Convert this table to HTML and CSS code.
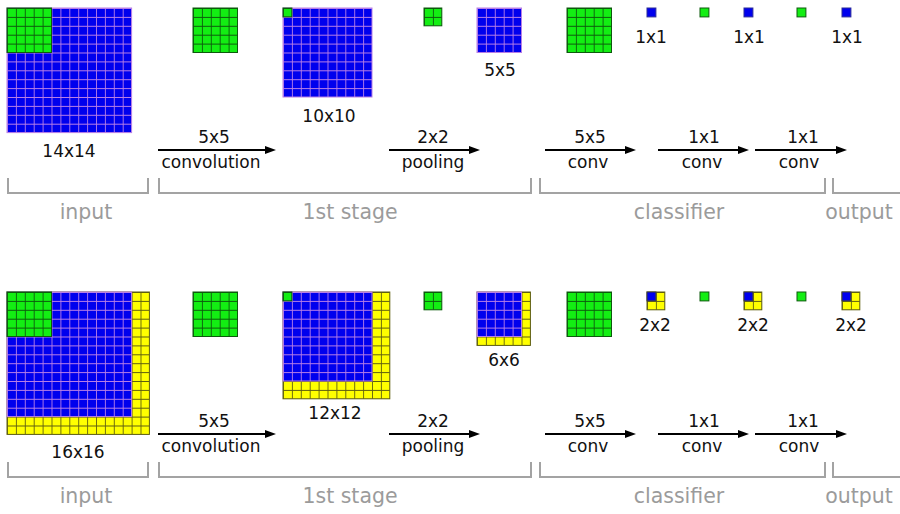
FILE: index.html
```html
<!DOCTYPE html>
<html lang="en">
<head>
<meta charset="utf-8">
<title>Convolutional network diagram</title>
<link rel="stylesheet" href="styles.css">
</head>
<body>
<main class="figure">
  <svg class="panel panel-top" width="900" height="284" viewBox="0 0 900 284" xmlns="http://www.w3.org/2000/svg">
    <defs>
      <pattern id="pb" width="8.9" height="8.9" patternUnits="userSpaceOnUse">
        <rect width="8.9" height="8.9" fill="#0000ee"/>
        <path d="M0 0H8.9M0 0V8.9" stroke="#b87ee6" stroke-width="1.8"/>
      </pattern>
      <pattern id="pg" width="8.9" height="8.9" patternUnits="userSpaceOnUse">
        <rect width="8.9" height="8.9" fill="#13ee13"/>
        <path d="M0 0H8.9M0 0V8.9" stroke="#0d5a0d" stroke-width="1.8"/>
      </pattern>
      <pattern id="py" width="8.9" height="8.9" patternUnits="userSpaceOnUse">
        <rect width="8.9" height="8.9" fill="#ffff00"/>
        <path d="M0 0H8.9M0 0V8.9" stroke="#5e5e10" stroke-width="1.8"/>
      </pattern>
    </defs>

    <!-- matrices -->
    <g transform="translate(7 8)"><rect class="blu" width="124.6" height="124.6"/><rect class="grn" width="44.5" height="44.5"/></g>
    <g transform="translate(193 8)"><rect class="grn" width="44.5" height="44.5"/></g>
    <g transform="translate(283 8)"><rect class="blu" width="89" height="89"/><rect class="grn" width="8.9" height="8.9"/></g>
    <g transform="translate(424 8)"><rect class="grn" width="17.8" height="17.8"/></g>
    <g transform="translate(477 8)"><rect class="blu" width="44.5" height="44.5"/></g>
    <g transform="translate(567 8)"><rect class="grn" width="44.5" height="44.5"/></g>
    <g transform="translate(647 8)"><rect class="cell-b" width="8.9" height="8.9"/></g>
    <g transform="translate(700 8)"><rect class="cell-g" width="8.9" height="8.9"/></g>
    <g transform="translate(744 8)"><rect class="cell-b" width="8.9" height="8.9"/></g>
    <g transform="translate(797 8)"><rect class="cell-g" width="8.9" height="8.9"/></g>
    <g transform="translate(842 8)"><rect class="cell-b" width="8.9" height="8.9"/></g>

    <!-- size labels -->
    <text class="lbl" x="69" y="157">14x14</text>
    <text class="lbl" x="329" y="122">10x10</text>
    <text class="lbl" x="500" y="76">5x5</text>
    <text class="lbl" x="651" y="43">1x1</text>
    <text class="lbl" x="749" y="43">1x1</text>
    <text class="lbl" x="847" y="43">1x1</text>

    <!-- arrows -->
    <g class="arrow"><line x1="158" y1="150" x2="268" y2="150"/><polygon points="265,146 276,150 265,154"/></g>
    <g class="arrow"><line x1="389" y1="150" x2="472" y2="150"/><polygon points="469,146 480,150 469,154"/></g>
    <g class="arrow"><line x1="545" y1="150" x2="628" y2="150"/><polygon points="625,146 636,150 625,154"/></g>
    <g class="arrow"><line x1="658" y1="150" x2="741" y2="150"/><polygon points="738,146 749,150 738,154"/></g>
    <g class="arrow"><line x1="755" y1="150" x2="839" y2="150"/><polygon points="836,146 847,150 836,154"/></g>

    <text class="lbl" x="214" y="143">5x5</text>
    <text class="lbl" x="211" y="168">convolution</text>
    <text class="lbl" x="433" y="143">2x2</text>
    <text class="lbl" x="433" y="168">pooling</text>
    <text class="lbl" x="590" y="143">5x5</text>
    <text class="lbl" x="588" y="168">conv</text>
    <text class="lbl" x="704" y="143">1x1</text>
    <text class="lbl" x="702" y="168">conv</text>
    <text class="lbl" x="803" y="143">1x1</text>
    <text class="lbl" x="799" y="168">conv</text>

    <!-- brackets -->
    <path class="brk" d="M8 178V193H148V178"/>
    <path class="brk" d="M159 178V193H531V178"/>
    <path class="brk" d="M540 178V193H825V178"/>
    <path class="brk" d="M833 178V193H900"/>
    <text class="stage" x="86" y="219">input</text>
    <text class="stage" x="350" y="219">1st stage</text>
    <text class="stage" x="679" y="219">classifier</text>
    <text class="stage" x="859" y="219">output</text>
  </svg>

  <svg class="panel panel-bottom" width="900" height="230" viewBox="0 284 900 230" xmlns="http://www.w3.org/2000/svg">
    <!-- matrices -->
    <g transform="translate(7 292)"><rect class="yel" width="142.4" height="142.4"/><rect class="blu" width="124.6" height="124.6"/><rect class="grn" width="44.5" height="44.5"/></g>
    <g transform="translate(193 292)"><rect class="grn" width="44.5" height="44.5"/></g>
    <g transform="translate(283 292)"><rect class="yel" width="106.8" height="106.8"/><rect class="blu" width="89" height="89"/><rect class="grn" width="8.9" height="8.9"/></g>
    <g transform="translate(424 292)"><rect class="grn" width="17.8" height="17.8"/></g>
    <g transform="translate(477 292)"><rect class="yel" width="53.4" height="53.4"/><rect class="blu" width="44.5" height="44.5"/></g>
    <g transform="translate(567 292)"><rect class="grn" width="44.5" height="44.5"/></g>
    <g transform="translate(647 292)"><rect class="yel" width="17.8" height="17.8"/><rect class="cell-b dark" width="8.9" height="8.9"/></g>
    <g transform="translate(700 292)"><rect class="cell-g" width="8.9" height="8.9"/></g>
    <g transform="translate(744 292)"><rect class="yel" width="17.8" height="17.8"/><rect class="cell-b dark" width="8.9" height="8.9"/></g>
    <g transform="translate(797 292)"><rect class="cell-g" width="8.9" height="8.9"/></g>
    <g transform="translate(842 292)"><rect class="yel" width="17.8" height="17.8"/><rect class="cell-b dark" width="8.9" height="8.9"/></g>

    <!-- size labels -->
    <text class="lbl" x="78" y="458">16x16</text>
    <text class="lbl" x="335" y="419">12x12</text>
    <text class="lbl" x="504" y="366">6x6</text>
    <text class="lbl" x="655" y="331">2x2</text>
    <text class="lbl" x="753" y="331">2x2</text>
    <text class="lbl" x="851" y="331">2x2</text>

    <!-- arrows -->
    <g class="arrow"><line x1="158" y1="434" x2="268" y2="434"/><polygon points="265,430 276,434 265,438"/></g>
    <g class="arrow"><line x1="389" y1="434" x2="472" y2="434"/><polygon points="469,430 480,434 469,438"/></g>
    <g class="arrow"><line x1="545" y1="434" x2="628" y2="434"/><polygon points="625,430 636,434 625,438"/></g>
    <g class="arrow"><line x1="658" y1="434" x2="741" y2="434"/><polygon points="738,430 749,434 738,438"/></g>
    <g class="arrow"><line x1="755" y1="434" x2="839" y2="434"/><polygon points="836,430 847,434 836,438"/></g>

    <text class="lbl" x="214" y="427">5x5</text>
    <text class="lbl" x="211" y="452">convolution</text>
    <text class="lbl" x="433" y="427">2x2</text>
    <text class="lbl" x="433" y="452">pooling</text>
    <text class="lbl" x="590" y="427">5x5</text>
    <text class="lbl" x="588" y="452">conv</text>
    <text class="lbl" x="704" y="427">1x1</text>
    <text class="lbl" x="702" y="452">conv</text>
    <text class="lbl" x="803" y="427">1x1</text>
    <text class="lbl" x="799" y="452">conv</text>

    <!-- brackets -->
    <path class="brk" d="M8 462V477H148V462"/>
    <path class="brk" d="M159 462V477H531V462"/>
    <path class="brk" d="M540 462V477H825V462"/>
    <path class="brk" d="M833 462V477H900"/>
    <text class="stage" x="86" y="503">input</text>
    <text class="stage" x="350" y="503">1st stage</text>
    <text class="stage" x="679" y="503">classifier</text>
    <text class="stage" x="859" y="503">output</text>
  </svg>
</main>
</body>
</html>
```

FILE: styles.css
```css
html, body {
  margin: 0;
  padding: 0;
  background: #ffffff;
}

.figure {
  display: flex;
  flex-direction: column;
  width: 900px;
  height: 514px;
  overflow: hidden;
}

.panel {
  display: block;
  flex: none;
}

.blu {
  fill: url(#pb);
  stroke: #b87ee6;
  stroke-width: 1;
}

.grn {
  fill: url(#pg);
  stroke: #0d5a0d;
  stroke-width: 1;
}

.yel {
  fill: url(#py);
  stroke: #5e5e10;
  stroke-width: 1;
}

.cell-b {
  fill: #0000ee;
  stroke: #2a2a9a;
  stroke-width: 1;
}

.cell-b.dark {
  stroke: #3a3a40;
}

.cell-g {
  fill: #13ee13;
  stroke: #0d5a0d;
  stroke-width: 1;
}

.lbl {
  font-family: "DejaVu Sans", "Liberation Sans", sans-serif;
  font-size: 17px;
  fill: #111111;
  text-anchor: middle;
}

.stage {
  font-family: "DejaVu Sans", "Liberation Sans", sans-serif;
  font-size: 20.5px;
  fill: #9b9b9b;
  text-anchor: middle;
}

.arrow line {
  stroke: #000000;
  stroke-width: 2;
}

.arrow polygon {
  fill: #000000;
}

.brk {
  fill: none;
  stroke: #a3a3a3;
  stroke-width: 2;
}
```
